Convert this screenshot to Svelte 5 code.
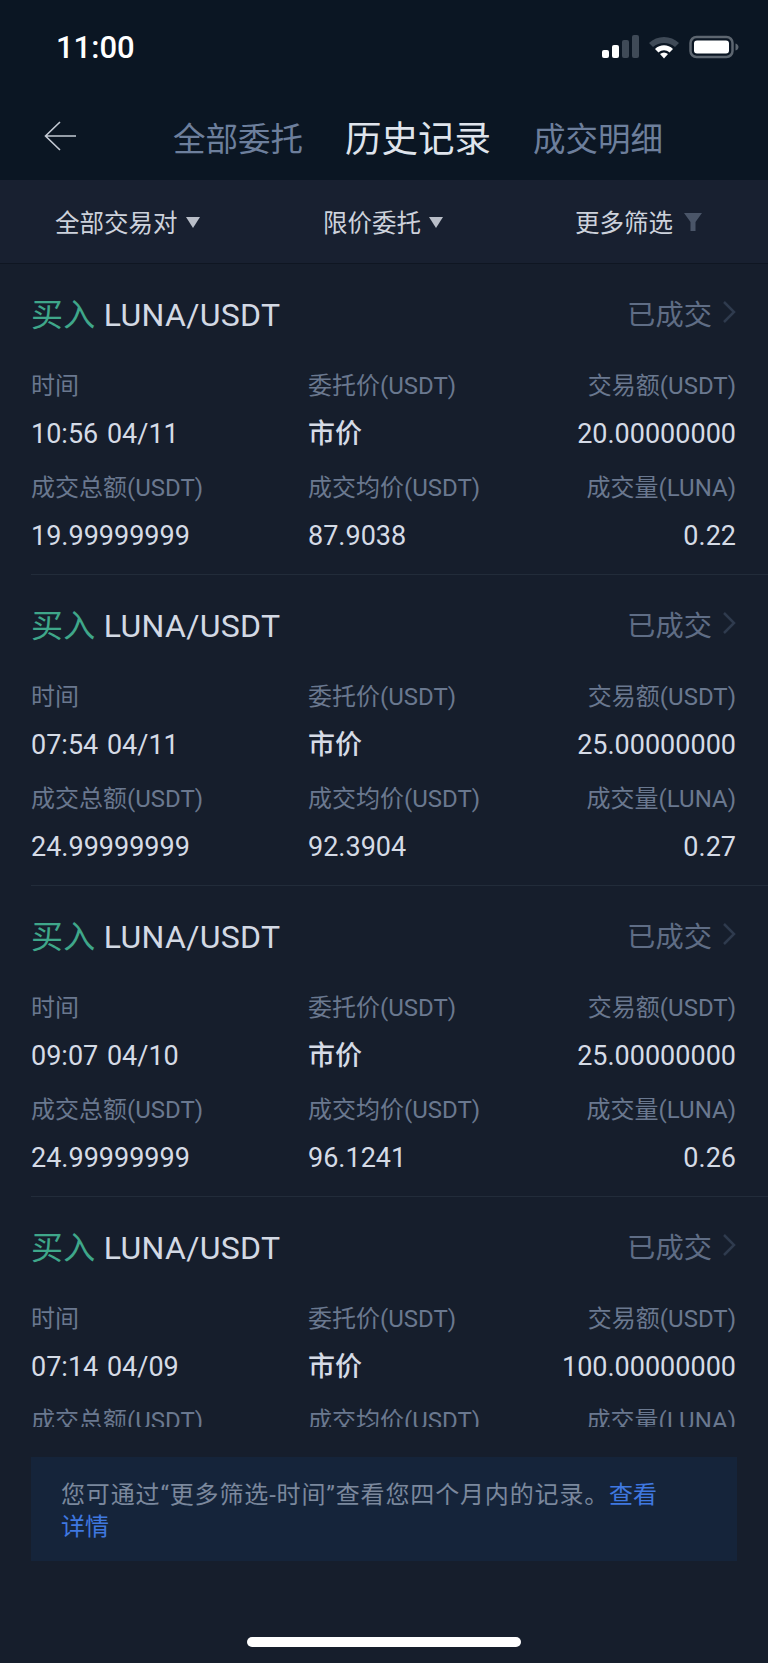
<script>
  const orders = [
    { time: "10:56 04/11", amount: "20.00000000", total: "19.99999999", avg: "87.9038", qty: "0.22" },
    { time: "07:54 04/11", amount: "25.00000000", total: "24.99999999", avg: "92.3904", qty: "0.27" },
    { time: "09:07 04/10", amount: "25.00000000", total: "24.99999999", avg: "96.1241", qty: "0.26" },
    { time: "07:14 04/09", amount: "100.00000000", total: "99.99999999", avg: "101.2200", qty: "0.98" },
  ];
</script>

<div class="page">
  <div class="top">
    <div class="status">
      <span class="clock">11:00</span>
      <div class="status-icons">
        <svg width="38" height="24" viewBox="0 0 38 24">
          <rect x="1" y="15" width="7" height="8" rx="2" fill="#fff" />
          <rect x="11" y="10" width="7" height="13" rx="2" fill="#fff" />
          <rect x="21" y="5" width="7" height="18" rx="2" fill="#3f4a57" />
          <rect x="31" y="0" width="7" height="23" rx="2" fill="#3f4a57" />
        </svg>
        <svg width="32" height="24" viewBox="0 0 32 24">
          <path d="M1 8 C9 0 23 0 31 8 L27 12 C21 6.500 11 6.500 5 12 Z" fill="#3f4a57" />
          <path d="M7 14 C12 9 20 9 25 14 L21.500 17.500 C18 14.500 14 14.500 10.500 17.500 Z" fill="#fff" />
          <path d="M12 19 C14.500 17 17.500 17 20 19 L16 23.500 Z" fill="#fff" />
        </svg>
        <svg width="50" height="24" viewBox="0 0 50 24">
          <rect x="1.500" y="2" width="42" height="20" rx="6" fill="none" stroke="#5d6670" stroke-width="2.500" />
          <rect x="5" y="5.500" width="35" height="13" rx="3" fill="#fff" />
          <path d="M46.500 8.500 C48.500 9 49.500 10.500 49.500 12 C49.500 13.500 48.500 15 46.500 15.500 Z" fill="#5d6670" />
        </svg>
      </div>
    </div>
    <div class="nav">
      <svg class="back" width="34" height="32" viewBox="0 0 34 32">
        <path d="M17 2 L2.500 16 L17 30 M2.500 16 H33" fill="none" stroke="#c4cad4" stroke-width="1.600" />
      </svg>
      <div class="tabs">
        <span class="tab">全部委托</span>
        <span class="tab active">历史记录</span>
        <span class="tab">成交明细</span>
      </div>
    </div>
  </div>

  <div class="filters">
    <div class="filter first">全部交易对<i class="caret"></i></div>
    <div class="filter">限价委托<i class="caret"></i></div>
    <div class="filter last">
      更多筛选
      <svg width="20" height="20" viewBox="0 0 20 20">
        <path d="M1 1 H19 L12.500 10 V19 H7.500 V10 Z" fill="#4a5568" />
      </svg>
    </div>
  </div>

  <div class="list">
    {#each orders as order, i}
      <div class="order" class:no-line={i === orders.length - 1}>
        <div class="order-head">
          <div class="pair"><span class="buy">买入</span> LUNA/USDT</div>
          <div class="state">
            已成交
            <svg width="14" height="24" viewBox="0 0 14 24">
              <path d="M2 2 L12 12 L2 22" fill="none" stroke="#2f3b4e" stroke-width="2.500" />
            </svg>
          </div>
        </div>
        <div class="grid">
          <div class="label">时间</div>
          <div class="label">委托价(USDT)</div>
          <div class="label right">交易额(USDT)</div>
          <div class="value">{order.time}</div>
          <div class="value market">市价</div>
          <div class="value right">{order.amount}</div>
          <div class="label">成交总额(USDT)</div>
          <div class="label">成交均价(USDT)</div>
          <div class="label right">成交量(LUNA)</div>
          <div class="value">{order.total}</div>
          <div class="value">{order.avg}</div>
          <div class="value right">{order.qty}</div>
        </div>
      </div>
    {/each}
  </div>

  <div class="notice">
    <span class="notice-text">您可通过“更多筛选-时间”查看您四个月内的记录。</span><span class="link">查看详情</span>
  </div>

  <div class="home-bar"></div>
</div>

<style>
  :global(body) {
    margin: 0;
    background: #161e2c;
  }

  .page {
    width: 768px;
    height: 1663px;
    position: relative;
    overflow: hidden;
    background: #161e2c;
    font-family: Roboto, "Noto Sans CJK SC", sans-serif;
  }

  .top {
    height: 180px;
    background: #0b1623;
  }

  .status {
    height: 94px;
    padding: 0 29px 0 56px;
    display: flex;
    align-items: center;
    justify-content: space-between;
  }

  .clock {
    color: #fff;
    font-size: 31px;
    font-weight: 500;
  }

  .status-icons {
    display: flex;
    align-items: center;
    gap: 9px;
  }

  .nav {
    height: 86px;
    padding-left: 43px;
    padding-top: 6px;
    box-sizing: border-box;
    display: flex;
    align-items: center;
  }

  .back {
    margin-right: 96px;
    margin-top: -8px;
  }

  .tabs {
    display: flex;
    align-items: center;
    gap: 42px;
  }

  .tab {
    font-size: 32.500px;
    line-height: 44px;
    color: #6d7f9c;
  }

  .tab.active {
    font-size: 36.500px;
    color: #dfe4ec;
  }

  .filters {
    height: 83px;
    background: #182030;
    border-bottom: 1px solid #0f1622;
    padding: 0 55px;
    display: flex;
    align-items: center;
    color: #cdd2dc;
    font-size: 24.500px;
  }

  .filter {
    display: flex;
    align-items: center;
    gap: 8px;
  }

  .filter.first {
    width: 268px;
  }

  .filter.last {
    margin-left: auto;
    margin-right: 10px;
    gap: 10px;
  }

  .caret {
    width: 0;
    height: 0;
    border-left: 7px solid transparent;
    border-right: 7px solid transparent;
    border-top: 11px solid #b9bec8;
    margin-top: 2px;
  }

  .list {
    height: 1163px;
    overflow: hidden;
  }

  .order {
    height: 310px;
    margin-left: 31px;
    padding-right: 32px;
    border-bottom: 1px solid #222c3a;
  }

  .order.no-line {
    border-bottom: none;
  }

  .order-head {
    height: 96px;
    display: flex;
    align-items: center;
    justify-content: space-between;
  }

  .pair {
    font-size: 32px;
    color: #d3d9e4;
    letter-spacing: 0.300px;
  }

  .buy {
    color: #3fa78a;
  }

  .state {
    display: flex;
    align-items: center;
    gap: 10px;
    font-size: 28.300px;
    color: #5f6d85;
  }

  .grid {
    display: grid;
    grid-template-columns: 277px 1fr auto;
    grid-template-rows: 46px 56px 46px 56px;
  }

  .label,
  .value {
    display: flex;
    align-items: center;
    white-space: pre;
  }

  .label {
    font-size: 24px;
    color: #6a788f;
  }

  .value {
    font-size: 27px;
    color: #d5dbe6;
    word-spacing: 2px;
  }

  .market {
    font-weight: 500;
    padding-bottom: 6px;
  }

  .right {
    justify-content: flex-end;
  }

  .notice {
    margin: 30px 31px 0;
    height: 104px;
    box-sizing: border-box;
    background: #15243a;
    padding: 22px 76px 0 30px;
    font-size: 24px;
    line-height: 32px;
    color: #7b889d;
  }

  .notice-text {
    letter-spacing: 0.850px;
  }

  .link {
    color: #3f78e0;
  }

  .home-bar {
    position: absolute;
    left: 247px;
    bottom: 16px;
    width: 274px;
    height: 10px;
    border-radius: 5px;
    background: #fff;
  }
</style>
